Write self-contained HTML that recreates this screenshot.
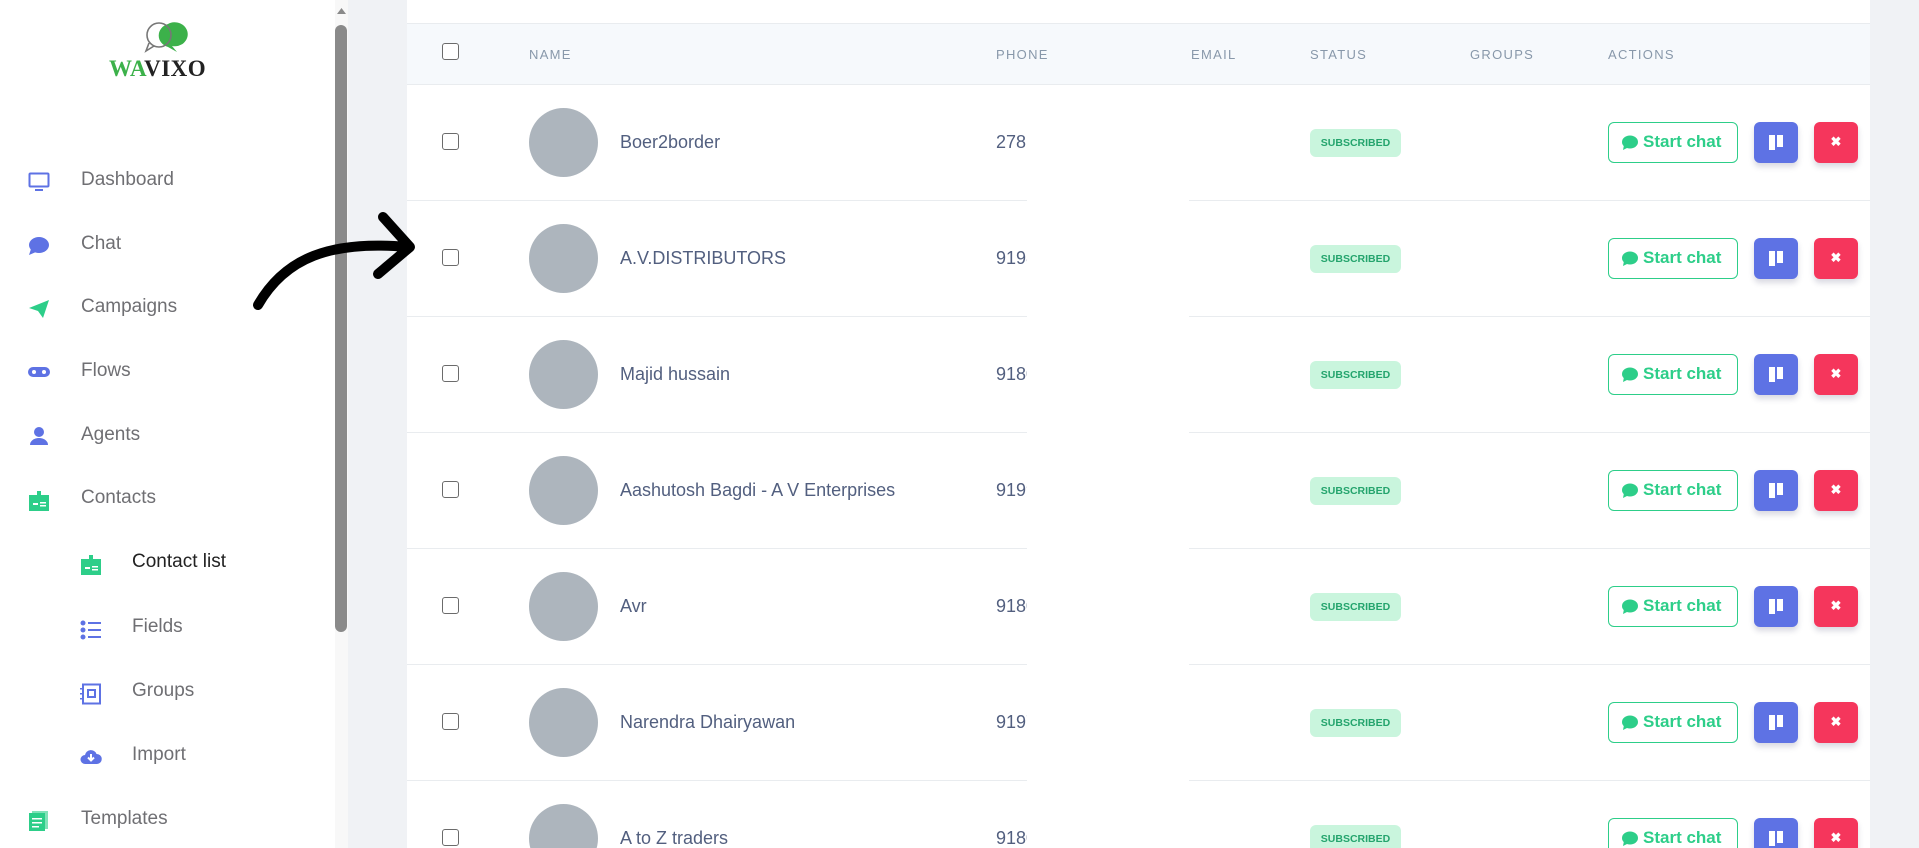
<!DOCTYPE html>
<html><head><meta charset="utf-8"><style>
*{box-sizing:border-box;margin:0;padding:0}
body{width:1919px;height:848px;overflow:hidden;background:#f0f2f5;font-family:"Liberation Sans",sans-serif;position:relative}
.sb{position:absolute;left:0;top:0;width:335px;height:848px;background:#fff}
.track{position:absolute;left:335px;top:0;width:13px;height:848px;background:#f8f8f8}
.thumb{position:absolute;left:335px;top:25px;width:12px;height:607px;background:#8a8a8a;border-radius:6px}
.nav{position:absolute;font-size:19px;color:#6f6f73}
.ic{position:absolute}
.card{position:absolute;left:407px;top:0;width:1463px;height:848px;background:#fff;overflow:hidden}
.hd{position:absolute;left:0;top:23px;width:1463px;height:62px;background:#f6f9fc;border-top:1px solid #e9ecef;border-bottom:1px solid #e9ecef}
.th{position:absolute;top:23px;font-size:13px;letter-spacing:1.3px;color:#8898aa}
.cb{position:absolute;width:17px;height:17px;border:1.5px solid #6b6b6b;border-radius:3px;background:#fff}
.row{position:absolute;left:0;width:1463px;height:116px;border-bottom:1px solid #e9ecef}
.row .cb{left:35px;top:48px}
.av{position:absolute;left:122px;top:23px;width:69px;height:69px;border-radius:50%;background:#adb5bd}
.nm{position:absolute;left:213px;top:47px;font-size:18px;color:#525f7f}
.ph{position:absolute;left:589px;top:47px;font-size:18px;color:#525f7f}
.bd{position:absolute;left:903px;top:44px;width:91px;height:28px;background:#c9f5dd;color:#24a46d;border-radius:6px;font-size:10.5px;font-weight:bold;text-align:center;line-height:28px}
.sc{position:absolute;left:1201px;top:37px;width:130px;height:41px;border:1.5px solid #2dce89;border-radius:6px;color:#2dce89;font-weight:bold;font-size:17px;line-height:38px;padding-left:34px}
.sc svg{position:absolute;left:12px;top:12px}
.bl{position:absolute;left:1347px;top:37px;width:44px;height:41px;background:#5e72e4;border-radius:6px;box-shadow:0 4px 6px rgba(50,50,93,.18)}
.bl:before{content:"";position:absolute;left:15px;top:13px;width:6px;height:15px;background:#fff}
.bl:after{content:"";position:absolute;left:23px;top:13px;width:6px;height:12px;background:#fff}
.rd{position:absolute;left:1407px;top:37px;width:44px;height:41px;background:#f5365c;border-radius:6px;box-shadow:0 4px 6px rgba(50,50,93,.18);color:#fff;font-size:13px;font-weight:bold;text-align:center;line-height:39px}
.mask{position:absolute;left:620px;top:85px;width:162px;height:763px;background:#fff}
</style></head><body>
<div class="sb"></div>
<div class="track"></div><div class="thumb"></div>
<svg class="ic" style="left:335px;top:6px" width="13" height="10"><path d="M2 8 L6.5 2 L11 8Z" fill="#8a8a8a"/></svg>
<svg class="ic" style="left:130px;top:20px" width="70" height="45">
<path d="M38 4 a13 12 0 1 1 4 22 l5 6 -9 -5 a13 12 0 0 1 0 -23z" fill="#3cb14a"/>
<circle cx="29" cy="15" r="12" fill="none" stroke="#777" stroke-width="1.6"/>
<path d="M19 23 l-3 8 8 -5" fill="none" stroke="#777" stroke-width="1.6"/>
</svg>
<div style="position:absolute;left:109px;top:56px;font-family:'Liberation Serif',serif;font-weight:bold;font-size:23px;letter-spacing:0.5px"><span style="color:#3cb14a">WA</span><span style="color:#222">VIXO</span></div>

<svg class="ic" style="left:28px;top:172px" width="22" height="20"><rect x="1.5" y="1.5" width="19" height="13" rx="1" fill="none" stroke="#5e72e4" stroke-width="2"/><rect x="7" y="17" width="8" height="2" fill="#5e72e4"/></svg>
<div class="nav" style="left:81px;top:169px">Dashboard</div>
<svg class="ic" style="left:28px;top:236px" width="22" height="20"><ellipse cx="11" cy="9" rx="10" ry="8" fill="#5e72e4"/><path d="M3 13 L1 19 L8 16Z" fill="#5e72e4"/></svg>
<div class="nav" style="left:81px;top:233px">Chat</div>
<svg class="ic" style="left:28px;top:299px" width="22" height="20"><path d="M1 9 L21 1 L15 19 L10 12Z" fill="#2dce89"/></svg>
<div class="nav" style="left:81px;top:296px">Campaigns</div>
<svg class="ic" style="left:28px;top:364px" width="22" height="16"><path d="M5 3 h12 a5 5 0 0 1 0 10 h-12 a5 5 0 0 1 0 -10z" fill="#5e72e4"/><circle cx="6" cy="8" r="2" fill="#fff"/><circle cx="16" cy="8" r="2" fill="#fff"/></svg>
<div class="nav" style="left:81px;top:360px">Flows</div>
<svg class="ic" style="left:29px;top:426px" width="20" height="20"><circle cx="10" cy="6" r="5" fill="#5e72e4"/><path d="M1 19 a9 7 0 0 1 18 0z" fill="#5e72e4"/></svg>
<div class="nav" style="left:81px;top:424px">Agents</div>
<svg class="ic" style="left:28px;top:490px" width="22" height="22"><rect x="1" y="5" width="20" height="16" fill="#2dce89"/><rect x="9" y="1" width="4" height="6" fill="#2dce89"/><rect x="5" y="13" width="5" height="2" fill="#fff"/><rect x="12" y="12" width="6" height="1.5" fill="#fff"/><rect x="12" y="15" width="6" height="1.5" fill="#fff"/></svg>
<div class="nav" style="left:81px;top:487px">Contacts</div>
<svg class="ic" style="left:80px;top:554px" width="22" height="22"><rect x="1" y="5" width="20" height="16" fill="#2dce89"/><rect x="9" y="1" width="4" height="6" fill="#2dce89"/><rect x="5" y="13" width="5" height="2" fill="#fff"/><rect x="12" y="12" width="6" height="1.5" fill="#fff"/><rect x="12" y="15" width="6" height="1.5" fill="#fff"/></svg>
<div class="nav" style="left:132px;top:551px;color:#222">Contact list</div>
<svg class="ic" style="left:80px;top:620px" width="22" height="20"><g fill="#5e72e4"><circle cx="3" cy="3" r="2.5"/><circle cx="3" cy="10" r="2.5"/><circle cx="3" cy="17" r="2.5"/><rect x="8" y="2" width="13" height="2"/><rect x="8" y="9" width="13" height="2"/><rect x="8" y="16" width="13" height="2"/></g></svg>
<div class="nav" style="left:132px;top:616px">Fields</div>
<svg class="ic" style="left:80px;top:683px" width="22" height="22"><rect x="3" y="1.5" width="17" height="19" fill="none" stroke="#5e72e4" stroke-width="2"/><rect x="8" y="7" width="7" height="7" fill="none" stroke="#5e72e4" stroke-width="2"/><g fill="#5e72e4"><rect x="0" y="5" width="4" height="1.5"/><rect x="0" y="10" width="4" height="1.5"/><rect x="0" y="15" width="4" height="1.5"/></g></svg>
<div class="nav" style="left:132px;top:680px">Groups</div>
<svg class="ic" style="left:80px;top:748px" width="22" height="18"><path d="M5 16 a4.5 4.5 0 0 1 0 -9 a6 6 0 0 1 11.5 -1 a5 5 0 0 1 0.5 10z" fill="#5e72e4"/><path d="M11 6 v6 M8 9.5 l3 3 3 -3" stroke="#fff" stroke-width="2" fill="none"/></svg>
<div class="nav" style="left:132px;top:744px">Import</div>
<svg class="ic" style="left:28px;top:810px" width="22" height="22"><rect x="4" y="1" width="16" height="18" fill="#2dce89" opacity=".6"/><rect x="1" y="3" width="16" height="18" fill="#2dce89"/><g fill="#fff"><rect x="4" y="8" width="10" height="1.5"/><rect x="4" y="12" width="10" height="1.5"/><rect x="4" y="16" width="7" height="1.5"/></g></svg>
<div class="nav" style="left:81px;top:808px">Templates</div>

<div class="card">
<div class="hd">
<div class="cb" style="left:35px;top:19px"></div>
<div class="th" style="left:122px">NAME</div>
<div class="th" style="left:589px">PHONE</div>
<div class="th" style="left:784px">EMAIL</div>
<div class="th" style="left:903px">STATUS</div>
<div class="th" style="left:1063px">GROUPS</div>
<div class="th" style="left:1201px">ACTIONS</div>
</div>

<div class="row" style="top:85px"><div class="cb"></div><div class="av"></div><div class="nm">Boer2border</div><div class="ph">278</div><div class="bd">SUBSCRIBED</div><div class="sc"><svg width="18" height="16"><ellipse cx="9" cy="7" rx="8" ry="6.5" fill="#2dce89"/><path d="M3 10 L2 15 L8 12Z" fill="#2dce89"/></svg>Start chat</div><div class="bl"></div><div class="rd">✖</div></div>
<div class="row" style="top:201px"><div class="cb"></div><div class="av"></div><div class="nm">A.V.DISTRIBUTORS</div><div class="ph">9198</div><div class="bd">SUBSCRIBED</div><div class="sc"><svg width="18" height="16"><ellipse cx="9" cy="7" rx="8" ry="6.5" fill="#2dce89"/><path d="M3 10 L2 15 L8 12Z" fill="#2dce89"/></svg>Start chat</div><div class="bl"></div><div class="rd">✖</div></div>
<div class="row" style="top:317px"><div class="cb"></div><div class="av"></div><div class="nm">Majid hussain</div><div class="ph">9180</div><div class="bd">SUBSCRIBED</div><div class="sc"><svg width="18" height="16"><ellipse cx="9" cy="7" rx="8" ry="6.5" fill="#2dce89"/><path d="M3 10 L2 15 L8 12Z" fill="#2dce89"/></svg>Start chat</div><div class="bl"></div><div class="rd">✖</div></div>
<div class="row" style="top:433px"><div class="cb"></div><div class="av"></div><div class="nm">Aashutosh Bagdi - A V Enterprises</div><div class="ph">9199</div><div class="bd">SUBSCRIBED</div><div class="sc"><svg width="18" height="16"><ellipse cx="9" cy="7" rx="8" ry="6.5" fill="#2dce89"/><path d="M3 10 L2 15 L8 12Z" fill="#2dce89"/></svg>Start chat</div><div class="bl"></div><div class="rd">✖</div></div>
<div class="row" style="top:549px"><div class="cb"></div><div class="av"></div><div class="nm">Avr</div><div class="ph">9180</div><div class="bd">SUBSCRIBED</div><div class="sc"><svg width="18" height="16"><ellipse cx="9" cy="7" rx="8" ry="6.5" fill="#2dce89"/><path d="M3 10 L2 15 L8 12Z" fill="#2dce89"/></svg>Start chat</div><div class="bl"></div><div class="rd">✖</div></div>
<div class="row" style="top:665px"><div class="cb"></div><div class="av"></div><div class="nm">Narendra Dhairyawan</div><div class="ph">9197</div><div class="bd">SUBSCRIBED</div><div class="sc"><svg width="18" height="16"><ellipse cx="9" cy="7" rx="8" ry="6.5" fill="#2dce89"/><path d="M3 10 L2 15 L8 12Z" fill="#2dce89"/></svg>Start chat</div><div class="bl"></div><div class="rd">✖</div></div>
<div class="row" style="top:781px"><div class="cb"></div><div class="av"></div><div class="nm">A to Z traders</div><div class="ph">9180</div><div class="bd">SUBSCRIBED</div><div class="sc"><svg width="18" height="16"><ellipse cx="9" cy="7" rx="8" ry="6.5" fill="#2dce89"/><path d="M3 10 L2 15 L8 12Z" fill="#2dce89"/></svg>Start chat</div><div class="bl"></div><div class="rd">✖</div></div>

<div class="mask"></div>
</div>

<svg class="ic" style="left:0;top:0" width="500" height="400"><path d="M258 305 C285 258 330 240 408 247 M383 217 L410 247 L378 274" fill="none" stroke="#000" stroke-width="10" stroke-linecap="round" stroke-linejoin="round"/></svg>
</body></html>
